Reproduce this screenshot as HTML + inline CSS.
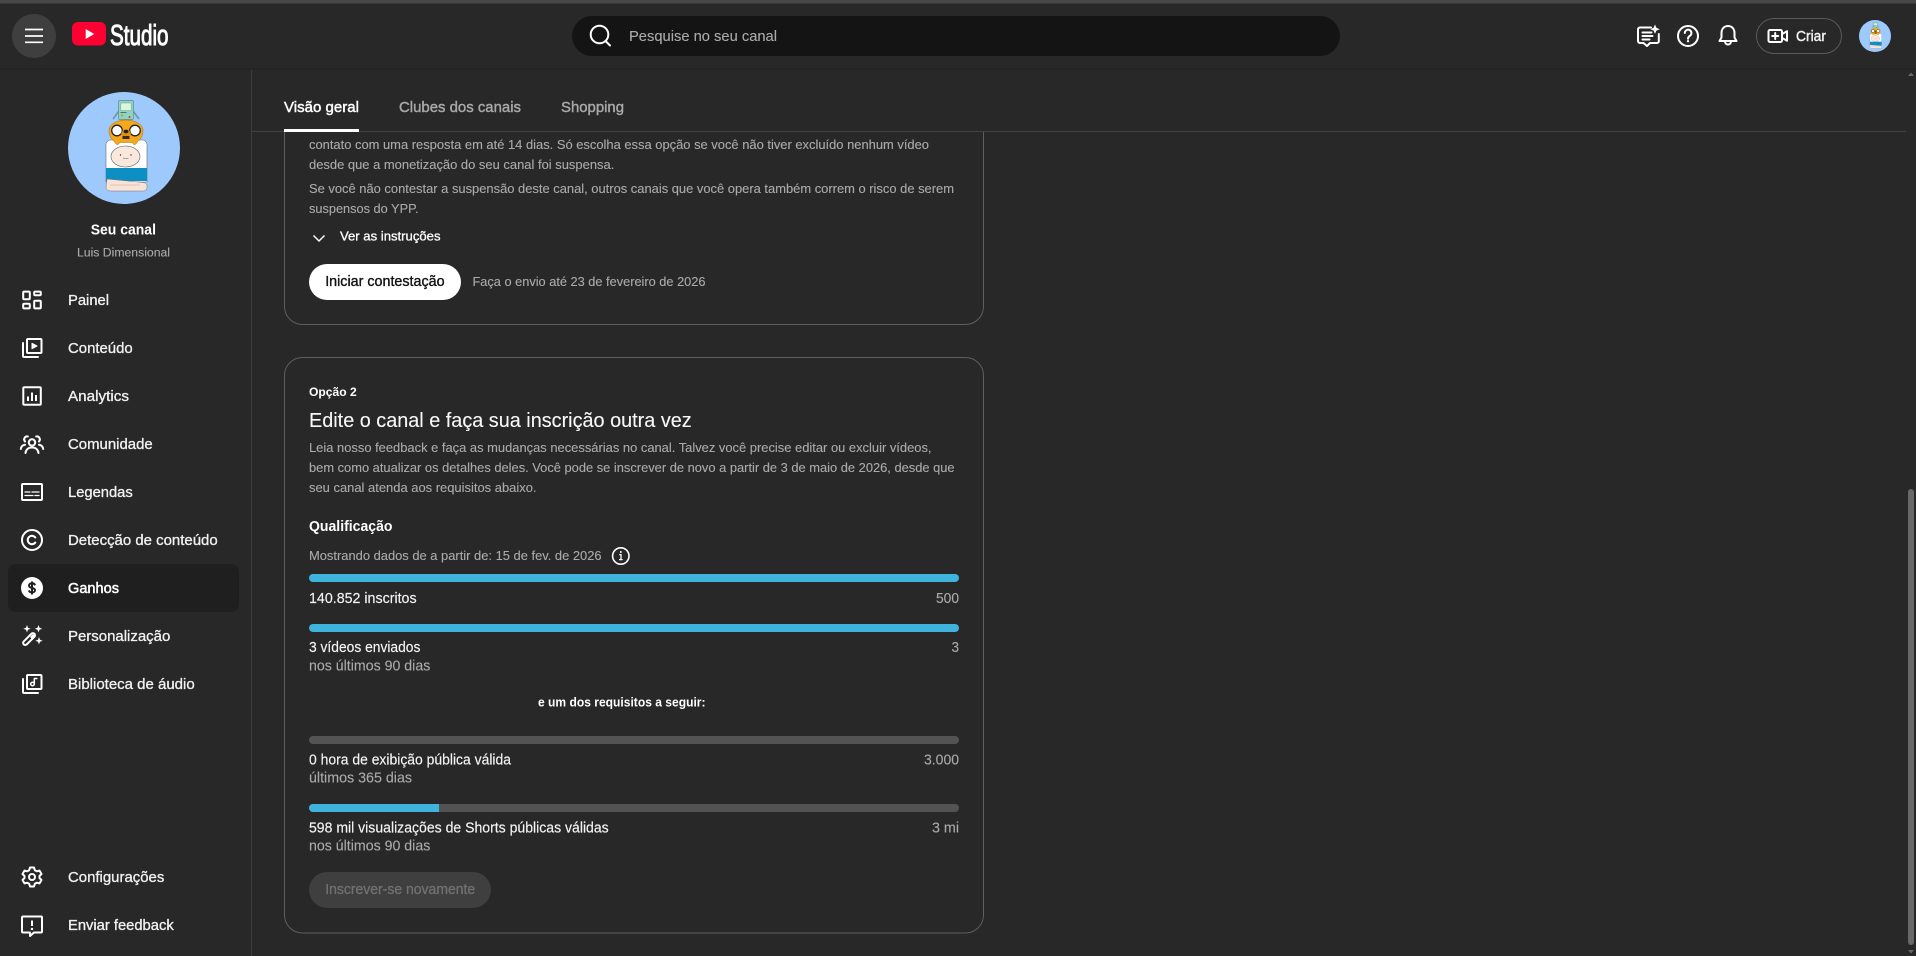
<!DOCTYPE html>
<html lang="pt-BR">
<head>
<meta charset="utf-8">
<title>YouTube Studio</title>
<style>
html,body{margin:0;padding:0;width:1916px;height:956px;overflow:hidden;background:#282828}
svg{display:block}
text{font-family:"Liberation Sans",sans-serif;white-space:pre}
.s{font-size:13.3px;fill:#aaa;stroke:#aaa;stroke-width:.12}
.l{font-size:14.3px;fill:#f4f4f4;stroke:#f4f4f4;stroke-width:.15}
.g{font-size:14.3px;fill:#aaa;stroke:#aaa;stroke-width:.12}
.n{font-size:15.2px;fill:#f1f1f1;stroke:#f1f1f1;stroke-width:.32}
.i{fill:none;stroke:#fff;stroke-width:2;stroke-linecap:round;stroke-linejoin:round}
</style>
</head>
<body>
<svg width="1916" height="956" viewBox="0 0 1916 956" xmlns="http://www.w3.org/2000/svg">
<rect width="1916" height="956" fill="#282828"/>

<!-- main cards -->
<rect x="284.5" y="90" width="699" height="234.5" rx="18" fill="none" stroke="#5e5e5e"/>
<rect x="284.5" y="357.5" width="699" height="575.5" rx="18" fill="none" stroke="#5e5e5e"/>

<rect x="252" y="69" width="1660" height="62" fill="#282828"/>
<rect x="252" y="131" width="1654" height="1" fill="#424242"/>
<rect x="251" y="68" width="1" height="888" fill="#3e3e3e"/>

<!-- tabs -->
<text x="284" y="112" font-size="15.2" fill="#fff" stroke="#fff" stroke-width=".45" textLength="75" lengthAdjust="spacingAndGlyphs">Visão geral</text>
<text x="399" y="112" font-size="15.2" fill="#aaa" stroke="#aaa" stroke-width=".4" textLength="122" lengthAdjust="spacingAndGlyphs">Clubes dos canais</text>
<text x="561" y="112" font-size="15.2" fill="#aaa" stroke="#aaa" stroke-width=".4" textLength="63" lengthAdjust="spacingAndGlyphs">Shopping</text>
<rect x="284" y="129" width="75" height="3" fill="#fff"/>

<!-- card 1 text -->
<text class="s" x="309" y="149" textLength="620" lengthAdjust="spacingAndGlyphs">contato com uma resposta em até 14 dias. Só escolha essa opção se você não tiver excluído nenhum vídeo</text>
<text class="s" x="309" y="169" textLength="305.3" lengthAdjust="spacingAndGlyphs">desde que a monetização do seu canal foi suspensa.</text>
<text class="s" x="309" y="193" textLength="645" lengthAdjust="spacingAndGlyphs">Se você não contestar a suspensão deste canal, outros canais que você opera também correm o risco de serem</text>
<text class="s" x="309" y="213" textLength="109.5" lengthAdjust="spacingAndGlyphs">suspensos do YPP.</text>
<path d="M313.5 235.5L319 241l5.500-5.500" fill="none" stroke="#fff" stroke-width="1.500"/>
<text x="340" y="240.500" font-size="13.3" fill="#fff" stroke="#fff" stroke-width=".3" textLength="100.500" lengthAdjust="spacingAndGlyphs">Ver as instruções</text>
<rect x="309" y="264" width="152" height="36" rx="18" fill="#fff"/>
<text x="325.200" y="286" font-size="14.3" fill="#0f0f0f" stroke="#0f0f0f" stroke-width=".35" textLength="119.400" lengthAdjust="spacingAndGlyphs">Iniciar contestação</text>
<text class="s" x="472.500" y="286" textLength="233" lengthAdjust="spacingAndGlyphs">Faça o envio até 23 de fevereiro de 2026</text>

<!-- card 2 text -->
<text x="309" y="396" font-size="12.2" fill="#fff" font-weight="700" textLength="47.700" lengthAdjust="spacingAndGlyphs">Opção 2</text>
<text x="309" y="427" font-size="20.300" fill="#f8f8f8" stroke="#f8f8f8" stroke-width=".12" textLength="382.700" lengthAdjust="spacingAndGlyphs">Edite o canal e faça sua inscrição outra vez</text>
<text class="s" x="309" y="452" textLength="622.500" lengthAdjust="spacingAndGlyphs">Leia nosso feedback e faça as mudanças necessárias no canal. Talvez você precise editar ou excluir vídeos,</text>
<text class="s" x="309" y="472" textLength="645.600" lengthAdjust="spacingAndGlyphs">bem como atualizar os detalhes deles. Você pode se inscrever de novo a partir de 3 de maio de 2026, desde que</text>
<text class="s" x="309" y="492" textLength="227.500" lengthAdjust="spacingAndGlyphs">seu canal atenda aos requisitos abaixo.</text>
<text x="309" y="531" font-size="14.3" fill="#fff" font-weight="700" textLength="83.500" lengthAdjust="spacingAndGlyphs">Qualificação</text>
<text class="s" x="309" y="560" textLength="292.600" lengthAdjust="spacingAndGlyphs">Mostrando dados de a partir de: 15 de fev. de 2026</text>
<circle cx="620.800" cy="556" r="8.200" fill="none" stroke="#fff" stroke-width="1.600"/>
<path d="M619.200 554.600h1.800v4.600M619 559.600h3.600" fill="none" stroke="#fff" stroke-width="1.300"/>
<circle cx="620.800" cy="552" r="1" fill="#fff"/>

<rect x="309" y="574" width="650" height="8" rx="4" fill="#3eb4dc"/>
<text class="l" x="309" y="603" textLength="107.600" lengthAdjust="spacingAndGlyphs">140.852 inscritos</text>
<text class="g" x="936" y="603" textLength="23" lengthAdjust="spacingAndGlyphs">500</text>

<rect x="309" y="624" width="650" height="8" rx="4" fill="#3eb4dc"/>
<text class="l" x="309" y="652" textLength="111.400" lengthAdjust="spacingAndGlyphs">3 vídeos enviados</text>
<text class="g" x="951.500" y="652" textLength="7.500" lengthAdjust="spacingAndGlyphs">3</text>
<text class="g" x="309" y="670.500" textLength="121.300" lengthAdjust="spacingAndGlyphs">nos últimos 90 dias</text>

<text x="538" y="706.500" font-size="13.2" fill="#fff" font-weight="700" textLength="167.500" lengthAdjust="spacingAndGlyphs">e um dos requisitos a seguir:</text>

<rect x="309" y="736" width="650" height="8" rx="4" fill="#535353"/>
<text class="l" x="309" y="764.500" textLength="202" lengthAdjust="spacingAndGlyphs">0 hora de exibição pública válida</text>
<text class="g" x="924" y="764.500" textLength="35" lengthAdjust="spacingAndGlyphs">3.000</text>
<text class="g" x="309" y="782.500" textLength="103" lengthAdjust="spacingAndGlyphs">últimos 365 dias</text>

<rect x="309" y="804" width="650" height="8" rx="4" fill="#535353"/>
<path d="M313 804h126v8H313a4 4 0 0 1 0-8z" fill="#3eb4dc"/>
<text class="l" x="309" y="832.500" textLength="299.700" lengthAdjust="spacingAndGlyphs">598 mil visualizações de Shorts públicas válidas</text>
<text class="g" x="932" y="832.500" textLength="27" lengthAdjust="spacingAndGlyphs">3 mi</text>
<text class="g" x="309" y="850.500" textLength="121.300" lengthAdjust="spacingAndGlyphs">nos últimos 90 dias</text>

<rect x="309" y="872" width="182" height="36" rx="18" fill="#3f3f3f"/>
<text x="325.200" y="894" font-size="14.3" fill="#717171" stroke="#717171" stroke-width=".3" textLength="150" lengthAdjust="spacingAndGlyphs">Inscrever-se novamente</text>

<!-- header -->
<rect x="0" y="68" width="1916" height="2" fill="#242424"/>
<rect x="0" y="0" width="1916" height="68" fill="#282828"/>
<rect x="0" y="0" width="1916" height="3.500" fill="#474747"/>
<circle cx="34" cy="36" r="22" fill="#3f3f3f"/>
<path d="M25 29.500h18M25 36h18M25 42.300h18" stroke="#fff" stroke-width="1.700"/>
<rect x="72" y="22" width="34" height="23.500" rx="6" fill="#ff0033"/>
<path d="M85.700 29v10l8.500-5z" fill="#fff"/>
<text x="110" y="45" font-size="29" fill="#fff" stroke="#fff" stroke-width="1" textLength="58.500" lengthAdjust="spacingAndGlyphs">Studio</text>

<rect x="572" y="16" width="768" height="40" rx="20" fill="#141414"/>
<circle cx="599.500" cy="34.500" r="8.800" fill="none" stroke="#fff" stroke-width="2"/>
<path d="M605.500 41l4.500 4.500" stroke="#fff" stroke-width="2" stroke-linecap="round"/>
<text x="629" y="41" font-size="15.2" fill="#aaa" stroke="#aaa" stroke-width=".12" textLength="148" lengthAdjust="spacingAndGlyphs">Pesquise no seu canal</text>

<!-- header right icons -->
<path class="i" d="M1651 27.500h-11a2 2 0 0 0-2 2V41a2 2 0 0 0 2 2h3.500l3.500 3 3-3h7a1.800 1.800 0 0 0 1.800-1.800V34"/>
<path class="i" d="M1642.500 32.500h9M1642.500 36h10M1642.500 39.500h7" stroke-width="1.700"/>
<path d="M1655 24.500l1.400 3.300 3.300 1.400-3.300 1.400-1.400 3.300-1.400-3.300-3.300-1.400 3.300-1.400z" fill="#fff"/>
<circle class="i" cx="1688" cy="36" r="10"/>
<path class="i" d="M1684.800 33a3.300 3.300 0 1 1 5.200 2.700c-1.300.9-2 1.500-2 3"/>
<circle cx="1688" cy="41.200" r="1.200" fill="#fff"/>
<path class="i" d="M1728 26c-4 0-6.500 3-6.500 7v4.500l-2 3.500h17l-2-3.500V33c0-4-2.500-7-6.500-7z"/>
<path class="i" d="M1725 41.500a3 3 0 0 0 6 0"/>
<rect x="1756.500" y="18.500" width="85" height="35" rx="17.500" fill="none" stroke="#5a5a5a"/>
<rect class="i" x="1768.500" y="30" width="13.500" height="12" rx="1.500"/>
<path class="i" d="M1775.200 33v6M1772.200 36h6M1782 34.200l5-3v9.600l-5-3" stroke-width="1.800"/>
<text x="1796" y="41" font-size="14.3" fill="#f1f1f1" stroke="#f1f1f1" stroke-width=".4" textLength="30" lengthAdjust="spacingAndGlyphs">Criar</text>

<!-- channel avatar -->
<g id="av">
<circle cx="124" cy="148" r="56" fill="#9dc9fd"/>
<path d="M119 111l-6 8M133 111l6 8" stroke="#6a9ca8" stroke-width="1.800" fill="none"/>
<rect x="118.500" y="100.500" width="15" height="19" rx="1.500" fill="#8ed4c0" stroke="#5c8f90" stroke-width=".7"/>
<rect x="120.800" y="103" width="10.400" height="7.600" rx=".8" fill="#dcf5dd" stroke="#5c8f90" stroke-width=".4"/>
<rect x="120.500" y="112" width="6" height="1" fill="#3f7b70"/>
<circle cx="122" cy="115.500" r="1.100" fill="#c99a2e"/>
<circle cx="129.500" cy="117" r="1" fill="#c8314a"/>
<path d="M106 146a5 5 0 0 1 5-6h31a5 5 0 0 1 5 6v36h-41z" fill="#fff" stroke="#6b6b6b" stroke-width=".6"/>
<rect x="106" y="168" width="41" height="13" fill="#0e8fc4"/>
<path d="M107 179l36 3.500c3 .3 4.500 2 4 5-.4 2-1.500 3.500-4 3.500h-32c-3 0-5-1.500-5-4z" fill="#f9e3d8" stroke="#7c6f6a" stroke-width=".5"/>
<path d="M110 185h30" stroke="#bba99f" stroke-width=".5"/>
<ellipse cx="125.500" cy="156.500" rx="14.500" ry="10.500" fill="#fbe8dd" stroke="#5f5f5f" stroke-width=".6"/>
<circle cx="120.500" cy="155" r=".7" fill="#333"/>
<circle cx="131" cy="155" r=".7" fill="#333"/>
<path d="M123 158q2.800 1.400 5.600 0" fill="none" stroke="#555" stroke-width=".5"/>
<path d="M109 131c0-7 8-11 17-11s17 4 17 11c0 6-4 9-6 11.500-1 2-3 3-4 1l-1-1h-12l-1 1c-1 2-3 1-4-1-2-2.500-6-5.500-6-11.500z" fill="#f5a81c" stroke="#a56f10" stroke-width=".5"/>
<circle cx="117" cy="130.500" r="5.300" fill="#fff" stroke="#222" stroke-width="1.300"/>
<circle cx="135" cy="130.500" r="5.300" fill="#fff" stroke="#222" stroke-width="1.300"/>
<path d="M123 130l3-1 3 1 2 4-2 3h-6l-2-3z" fill="#e18f10"/>
<ellipse cx="126" cy="131.500" rx="2.500" ry="1.700" fill="#222"/>
<path d="M122.500 136h7v3h-7z" fill="#3a2a1c"/>
</g>
<use href="#av" transform="translate(1875 36) scale(.2857) translate(-124 -148)"/>

<text x="90.700" y="234.500" font-size="14.3" fill="#fff" font-weight="700" textLength="65.300" lengthAdjust="spacingAndGlyphs">Seu canal</text>
<text x="77" y="256.500" font-size="12.3" fill="#aaa" stroke="#aaa" stroke-width=".12" textLength="93" lengthAdjust="spacingAndGlyphs">Luis Dimensional</text>

<!-- sidebar nav -->
<rect x="8" y="564" width="231" height="48" rx="8" fill="#1f1f1f"/>
<text class="n" x="68" y="305" textLength="41" lengthAdjust="spacingAndGlyphs">Painel</text>
<text class="n" x="68" y="353" textLength="64.700" lengthAdjust="spacingAndGlyphs">Conteúdo</text>
<text class="n" x="68" y="401" textLength="61" lengthAdjust="spacingAndGlyphs">Analytics</text>
<text class="n" x="68" y="449" textLength="84.700" lengthAdjust="spacingAndGlyphs">Comunidade</text>
<text class="n" x="68" y="497" textLength="64.700" lengthAdjust="spacingAndGlyphs">Legendas</text>
<text class="n" x="68" y="545" textLength="149.700" lengthAdjust="spacingAndGlyphs">Detecção de conteúdo</text>
<text x="68" y="593" font-size="15.2" fill="#fff" stroke="#fff" stroke-width=".5" textLength="51" lengthAdjust="spacingAndGlyphs">Ganhos</text>
<text class="n" x="68" y="641" textLength="102.300" lengthAdjust="spacingAndGlyphs">Personalização</text>
<text class="n" x="68" y="689" textLength="126.700" lengthAdjust="spacingAndGlyphs">Biblioteca de áudio</text>
<text class="n" x="68" y="882" textLength="96.300" lengthAdjust="spacingAndGlyphs">Configurações</text>
<text class="n" x="68" y="930" textLength="105.700" lengthAdjust="spacingAndGlyphs">Enviar feedback</text>

<!-- Painel -->
<g class="i" transform="translate(20 288)" stroke-width="1.700">
<rect x="3.200" y="3.600" width="6.600" height="7.600" rx="1"/><rect x="14.200" y="3.600" width="6.600" height="3.600" rx="1"/>
<rect x="3.200" y="15.800" width="6.600" height="4.600" rx="1"/><rect x="14.200" y="12.800" width="6.600" height="7.600" rx="1"/>
</g>
<!-- Conteudo -->
<g class="i" transform="translate(20 336)" stroke-width="1.800">
<rect x="7" y="3" width="14.500" height="14" rx="1"/><path d="M3 7v13a1 1 0 0 0 1 1h14"/>
<path d="M12 7.300l5 2.700-5 2.700z" fill="#fff" stroke-width="1"/>
</g>
<!-- Analytics -->
<g class="i" transform="translate(20 384)" stroke-width="1.800">
<rect x="3.300" y="3.300" width="17.500" height="17.500" rx="1"/>
<path d="M8 12.500V17M12 8.500V17M16 11V17" stroke-linecap="butt"/>
</g>
<!-- Comunidade -->
<g class="i" transform="translate(20 432)" stroke-width="1.500">
<circle cx="12" cy="10.500" r="3.200"/>
<path d="M5.500 21c.4-3.500 3-5.500 6.500-5.500s6.100 2 6.500 5.500"/>
<path d="M7.800 4.500a3 3 0 0 0-2.800 5"/><path d="M16.200 4.500a3 3 0 0 1 2.800 5"/>
<path d="M.8 17c.4-2.500 2-4 4.200-4.300"/><path d="M23.200 17c-.4-2.500-2-4-4.200-4.300"/>
</g>
<!-- Legendas -->
<g class="i" transform="translate(20 480)" stroke-linecap="butt" stroke-width="1.800">
<rect x="2" y="4" width="20" height="16" rx="1"/>
<path d="M5 12h5M12 12h7M5 15.500h8M15 15.500h4" stroke-width="1.300"/>
</g>
<!-- Deteccao -->
<g class="i" transform="translate(20 528)" stroke-width="1.800">
<circle cx="12" cy="12" r="10"/>
<path d="M15.300 9.500a4.200 4.200 0 1 0 0 5"/>
</g>
<!-- Ganhos -->
<g transform="translate(20 576)">
<circle cx="12" cy="12" r="11" fill="#fff"/>
<path d="M15 9.300c-.4-1.300-1.600-2-3-2-1.800 0-3 .9-3 2.300 0 3.200 6 1.500 6 4.600 0 1.400-1.300 2.300-3 2.300-1.500 0-2.700-.7-3.100-2.100M12 5.500v13" fill="none" stroke="#1f1f1f" stroke-width="2"/>
</g>
<!-- Personalizacao -->
<g transform="translate(20 624)">
<rect class="i" x="1.500" y="13" width="15" height="4.200" rx="2.100" transform="rotate(-45 9 15)" stroke-width="1.700"/>
<path d="M10 13l3-3 2 2-3 3z" fill="#fff"/>
<path d="M7 1l1 2.700 2.700 1-2.700 1-1 2.700-1-2.700-2.700-1 2.700-1zM18.500 1l1 2.700 2.700 1-2.700 1-1 2.700-1-2.700-2.700-1 2.700-1zM19 13l1 2.700 2.700 1-2.700 1-1 2.700-1-2.700-2.700-1 2.700-1z" fill="#fff"/>
</g>
<!-- Biblioteca -->
<g class="i" transform="translate(20 672)" stroke-width="1.800">
<rect x="7" y="3" width="14.500" height="14" rx="1"/><path d="M3 7v13a1 1 0 0 0 1 1h14"/>
<circle cx="12.500" cy="12" r="1.800" stroke-width="1.500"/><path d="M14.300 12V6.500h2.500" stroke-width="1.500"/>
</g>
<!-- Configuracoes -->
<g class="i" transform="translate(20 865)" stroke-width="1.800">
<path d="M10 2.500h4l.8 2.700 2 1.100 2.700-.7 2 3.400-2 2v2l2 2-2 3.400-2.700-.7-2 1.100-.8 2.700h-4l-.8-2.700-2-1.100-2.700.7-2-3.400 2-2v-2l-2-2 2-3.400 2.700.7 2-1.100z"/>
<circle cx="12" cy="12" r="3"/>
</g>
<!-- Feedback -->
<g transform="translate(20 913)">
<path class="i" d="M3 3.500h18a1 1 0 0 1 1 1v14a1 1 0 0 1-1 1h-7l-4 3.500v-3.500H3a1 1 0 0 1-1-1v-14a1 1 0 0 1 1-1z" stroke-width="1.800"/>
<path d="M12 7.500v5.500" stroke="#fff" stroke-width="2"/><circle cx="12" cy="16" r="1.200" fill="#fff"/>
</g>

<!-- scrollbar -->
<rect x="1908" y="489" width="6" height="456" rx="3" fill="#686868"/>
<path d="M1908 76h6l-3-3.500z" fill="#686868"/>
<path d="M1908 950h6l-3 3.500z" fill="#686868"/>
</svg>
</body>
</html>
